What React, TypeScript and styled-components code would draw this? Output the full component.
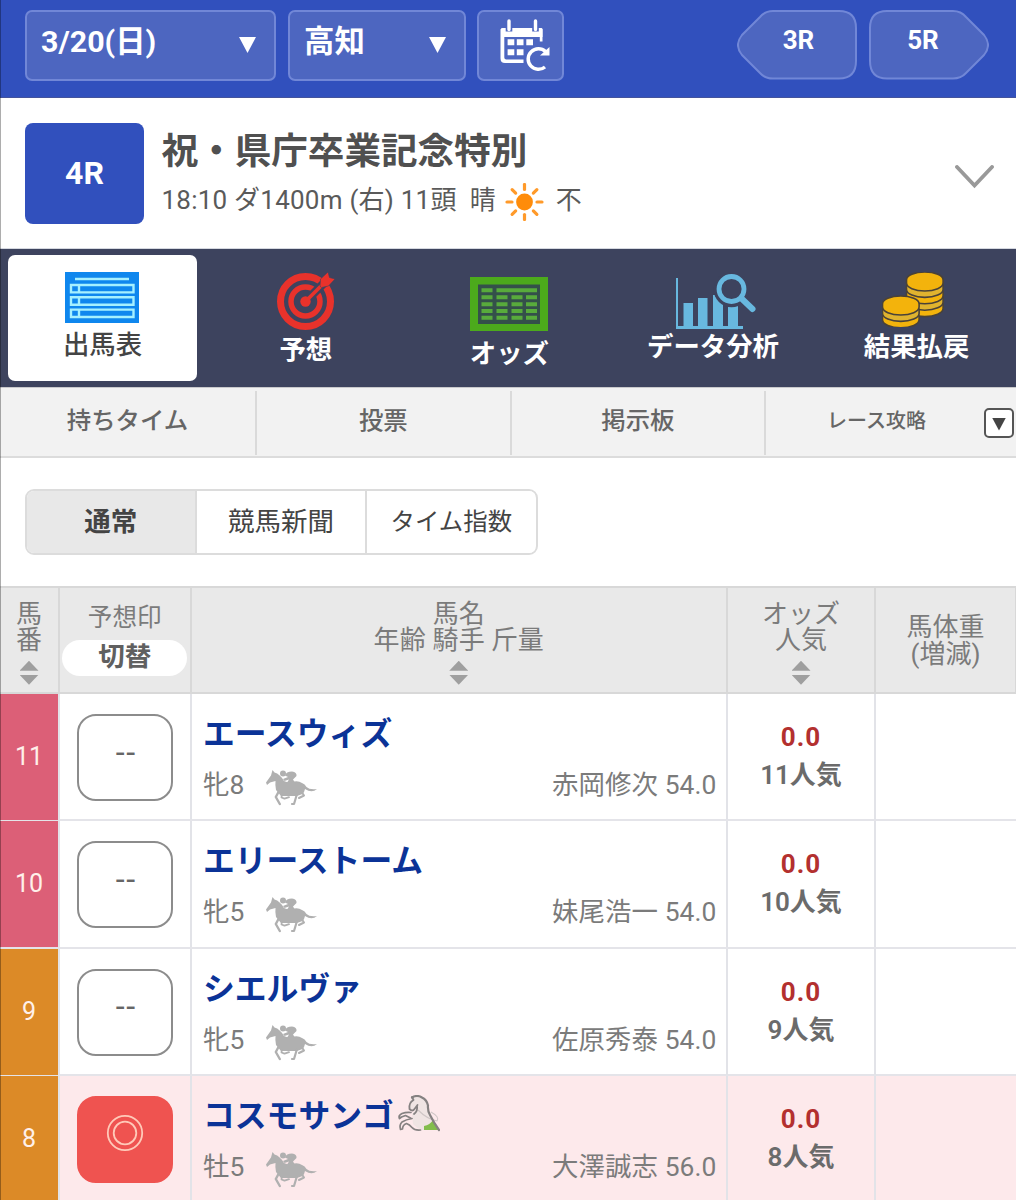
import React from "react";
import styled, { createGlobalStyle } from "styled-components";

const Global = createGlobalStyle`
  * { box-sizing: border-box; }
  body { margin: 0; background: #fff; }
`;

const Page = styled.div`
  position: relative;
  width: 1016px;
  height: 1200px;
  overflow: hidden;
  background: #fff;
  color: #555;
  font-family: Roboto, "Noto Sans CJK JP", sans-serif;
  white-space: nowrap;
`;

const EdgeShade = styled.div`
  position: absolute;
  left: 0;
  top: 0;
  bottom: 0;
  width: 1px;
  background: rgba(0, 0, 0, 0.32);
`;

/* ---------- top bar ---------- */

const TopBar = styled.header`
  display: flex;
  height: 98px;
  padding: 10px 27px 0 25px;
  background: #3150bd;
  border-bottom: 1px solid #44539c;
`;

const Picker = styled.button<{ $w: number; $gap?: number }>`
  display: flex;
  align-items: center;
  justify-content: space-between;
  width: ${(p) => p.$w}px;
  height: 71px;
  margin: 0 ${(p) => p.$gap ?? 0}px 0 0;
  padding: 0 18px 8px 14px;
  border: 2px solid #7187d7;
  border-radius: 7px;
  background: #4d66c0;
  color: #fff;
  font: 700 30.4px/40px Roboto, "Noto Sans CJK JP", sans-serif;
`;

const DownMark = styled.i<{ $w: number; $h: number; $c: string; $top?: number }>`
  width: ${(p) => p.$w}px;
  height: ${(p) => p.$h}px;
  margin-top: ${(p) => p.$top ?? 0}px;
  background: ${(p) => p.$c};
  clip-path: polygon(0 0, 100% 0, 50% 100%);
`;

const IconPicker = styled(Picker)`
  justify-content: center;
  padding: 0 0 1px 10px;
`;

const RaceStep = styled.a<{ $first?: boolean }>`
  display: grid;
  width: 120px;
  height: 70px;
  margin-left: ${(p) => (p.$first ? "auto" : "12px")};
  & > * {
    grid-area: 1 / 1;
  }
`;

const StepText = styled.span<{ $left?: number; $right?: number }>`
  z-index: 1;
  padding: 0 ${(p) => p.$right ?? 0}px 0 ${(p) => p.$left ?? 0}px;
  color: #fff;
  font-size: 26px;
  font-weight: 700;
  line-height: 61px;
  text-align: center;
`;

/* ---------- race title ---------- */

const RaceHead = styled.section`
  display: flex;
  height: 151px;
  padding: 25px 22px 0 25px;
  border-bottom: 1px solid #d5d8e0;
`;

const RaceNo = styled.div`
  width: 119px;
  height: 101px;
  border-radius: 8px;
  background: #3150bd;
  color: #fff;
  font-size: 32px;
  font-weight: 700;
  line-height: 100px;
  text-align: center;
`;

const RaceText = styled.div`
  margin-left: 17.5px;
  padding-top: 6px;
`;

const RaceName = styled.h1`
  margin: 0;
  color: #505050;
  font-size: 36.6px;
  font-weight: 700;
  line-height: 46px;
`;

const RaceInfo = styled.div`
  display: flex;
  height: 50px;
  align-items: center;
  color: #5a5a5a;
  font-size: 26px;
  line-height: 50px;
  svg {
    margin: 3px 12px 0 9px;
  }
`;

const InfoText = styled.span<{ $right?: number; $spacing?: number }>`
  margin-right: ${(p) => p.$right ?? 0}px;
  letter-spacing: ${(p) => p.$spacing ?? 0}px;
`;

const Chevron = styled.svg`
  margin: 42px 0 0 auto;
`;

/* ---------- main navigation ---------- */

const MainNav = styled.nav`
  display: flex;
  height: 138px;
  padding: 6px 0 0 1px;
  background: #3d435e;
`;

const NavItem = styled.a<{
  $pad: number;
  $gap: number;
  $active?: boolean;
  $nudge?: number;
}>`
  display: flex;
  flex: 0 0 ${(p) => (p.$active ? 189 : 203.6)}px;
  flex-direction: column;
  align-items: center;
  gap: ${(p) => p.$gap}px;
  height: 126px;
  margin: ${(p) => (p.$active ? "0 7px" : "0")};
  padding-top: ${(p) => p.$pad}px;
  border-radius: 7px;
  background: ${(p) => (p.$active ? "#fff" : "transparent")};
  color: ${(p) => (p.$active ? "#444" : "#fff")};
  svg {
    flex: none;
    margin-left: ${(p) => p.$nudge ?? 0}px;
  }
`;

const NavLabel = styled.span<{ $w?: number }>`
  font-size: 26.4px;
  font-weight: ${(p) => p.$w ?? 700};
  line-height: 30px;
`;

/* ---------- sub navigation ---------- */

const SubNav = styled.nav`
  display: flex;
  height: 71px;
  padding-top: 3px;
  border-top: 1px solid #c9c9cc;
  border-bottom: 2px solid #dcdcdc;
  background: #f2f2f2;
`;

const SubItem = styled.a<{ $size?: number }>`
  flex: 0 0 254.6px;
  height: 64px;
  border-right: 2px solid #dadada;
  color: #666;
  font-size: ${(p) => p.$size ?? 24.4}px;
  font-weight: 500;
  line-height: 59px;
  text-align: center;
  &:first-child {
    flex-basis: 257px;
  }
  &:last-child {
    display: flex;
    flex: 1;
    justify-content: flex-end;
    padding-right: 2px;
    border-right: 0;
    line-height: 61px;
  }
`;

const MoreBox = styled.span`
  display: flex;
  align-items: center;
  justify-content: center;
  width: 30px;
  height: 30px;
  margin: 17px 0 0 58px;
  border: 2px solid #555;
  border-radius: 5px;
  background: #fff;
`;

/* ---------- view switch ---------- */

const ViewBar = styled.div`
  display: flex;
  height: 128px;
  padding: 31px 0 0 24.5px;
`;

const ViewGroup = styled.div`
  display: flex;
  width: 513px;
  height: 66px;
  overflow: hidden;
  border: 2px solid #dcdcdc;
  border-radius: 9px;
`;

const ViewTab = styled.button<{ $on?: boolean; $size: number }>`
  flex: 1 1 0;
  padding: 0;
  border: 0;
  border-right: 2px solid #dcdcdc;
  background: ${(p) => (p.$on ? "#e8e8e8" : "#fff")};
  color: #444;
  font: ${(p) => (p.$on ? 700 : 400)} ${(p) => p.$size}px/60px Roboto,
    "Noto Sans CJK JP", sans-serif;
  &:last-child {
    border-right: 0;
  }
`;

/* ---------- table ---------- */

const columns = "60px 131.5px 536.5px 148px 140px";

const HeadRow = styled.div`
  display: grid;
  grid-template-columns: ${columns};
  height: 108px;
  border-top: 2px solid #d8d8d8;
  border-bottom: 2px solid #d8d8d8;
  background: #e9e9e9;
`;

const HeadCell = styled.div<{ $pad: number }>`
  display: flex;
  flex-direction: column;
  align-items: center;
  padding-top: ${(p) => p.$pad}px;
  border-right: 2px solid #d8d8d8;
  color: #7b7b7b;
  font-size: 26px;
  font-weight: 400;
  line-height: 26.6px;
  &:last-child {
    border-right-width: 1px;
  }
`;

const MarkTitle = styled.span`
  font-size: 24.6px;
`;

const HeadText = styled.span<{ $spacing?: number }>`
  letter-spacing: ${(p) => p.$spacing ?? 0}px;
`;

const Pill = styled.span`
  width: 125px;
  height: 36px;
  margin-top: 8px;
  border-radius: 18px;
  background: #fff;
  color: #606060;
  font-size: 26.5px;
  font-weight: 700;
  line-height: 34px;
  text-align: center;
`;

const SortMark = styled.span`
  display: flex;
  flex-direction: column;
  gap: 4px;
  margin-top: 7px;
  &::before,
  &::after {
    content: "";
    width: 19px;
    height: 10px;
    background: #9f9f9f;
    clip-path: polygon(50% 0, 100% 100%, 0 100%);
  }
  &::after {
    clip-path: polygon(0 0, 100% 0, 50% 100%);
  }
`;

const Row = styled.div<{ $picked?: boolean }>`
  display: grid;
  grid-template-columns: ${columns};
  height: 127.3px;
  border-bottom: 2px solid #e4e4e9;
  background: ${(p) => (p.$picked ? "#fde9eb" : "#fff")};
`;

const Cell = styled.div`
  border-right: 2px solid #e2e3e8;
  &:last-child {
    border-right: 0;
  }
`;

const NoCell = styled(Cell)<{ $c: string }>`
  background: ${(p) => p.$c};
  background-clip: padding-box;
  color: #fff0ea;
  font-size: 25px;
  line-height: 126px;
  text-align: center;
`;

const MarkCell = styled(Cell)`
  padding: 20px 0 0 17.4px;
`;

const Mark = styled.button<{ $on?: boolean }>`
  display: flex;
  align-items: center;
  justify-content: center;
  width: 96px;
  height: 87px;
  padding: 0 0 ${(p) => (p.$on ? 13 : 18)}px;
  border: 2px solid ${(p) => (p.$on ? "#ef5350" : "#8c8c8c")};
  border-radius: 19px;
  background: ${(p) => (p.$on ? "#ef5350" : "#fff")};
  color: #666;
  font: 500 29px/40px "Noto Sans CJK JP", sans-serif;
`;

const HorseCell = styled(Cell)`
  display: flex;
  flex-direction: column;
  padding: 17px 9.5px 0 11.5px;
`;

const HorseName = styled.div`
  display: flex;
  align-items: center;
  height: 46px;
  color: #0b3397;
  font-size: 31.8px;
  font-weight: 700;
  line-height: 46px;
  svg {
    margin: 0 0 5px 4px;
  }
`;

const HorseSub = styled.div`
  display: flex;
  align-items: center;
  margin-top: 8px;
  height: 40px;
  color: #7b7b7b;
  font-size: 26.4px;
  font-weight: 400;
  line-height: 40px;
  svg {
    margin: 6px 0 0 22px;
  }
`;

const Jockey = styled.span`
  margin-left: auto;
  letter-spacing: 0.1px;
`;

const OddsCell = styled(Cell)`
  padding-top: 24px;
  text-align: center;
`;

const Odds = styled.div`
  color: #b3302f;
  font-size: 26px;
  font-weight: 700;
  letter-spacing: 1px;
  line-height: 38px;
`;

const Rank = styled.div`
  color: #6b6b6b;
  font-size: 26px;
  font-weight: 600;
  line-height: 38px;
`;

/* ---------- drawings ---------- */

const CalendarIcon = () => (
  <svg width="52" height="54" viewBox="500 18 52 54" fill="none">
    <path d="M503 28h38q1.500 0 1.500 1.500v12h-2.700v-5H504.300v21q0 2 2 2H523.500v3.500H505q-4.500 0-4.500-4.500V29.500q0-1.500 2.500-1.500z" fill="#fff" />
    <path d="M503 28h38q1.500 0 1.500 1.500V37H501V29.500q0-1.500 2-1.500z" fill="#fff" />
    <path d="M509 19v12.500M535.500 19v12.500" stroke="#4d66c0" strokeWidth="6.600" />
    <path d="M509 21v8.500M535.500 21v8.500" stroke="#fff" strokeWidth="3.400" strokeLinecap="round" />
    <path d="M507.600 39.300h6.700v6h-6.700zM516.800 39.300h6.700v6h-6.700zM526.300 39.300h6.700v6h-6.700zM507.600 49.300h6.700v6h-6.700zM516.800 49.300h6.700v6h-6.700z" fill="#fff" />
    <path d="M545 67A10.300 10.300 0 1 1 545.500 51.500" stroke="#fff" strokeWidth="3.500" />
    <path d="M549.500 47v8.500h-9.500z" fill="#fff" />
  </svg>
);

const StepShape = ({ flip }: { flip?: boolean }) => (
  <svg width="120" height="70" viewBox="0 0 120 70">
    <path
      d="M36 1H102Q119 1 119 18V51Q119 68.500 102 68.500H36Q28 68.500 23 63L5 45Q-3 35 5 25L23 7Q28 1 36 1Z"
      fill="#4d66c0"
      stroke="#7187d7"
      strokeWidth="2"
      transform={flip ? "translate(120 0) scale(-1 1)" : undefined}
    />
  </svg>
);

const SunIcon = () => (
  <svg width="39" height="38" viewBox="-19.500 -19 39 38">
    <circle r="8.400" fill="#ff8c0a" />
    {[0, 45, 90, 135, 180, 225, 270, 315].map((a) => (
      <path key={a} d="M12.500 0H17.500" stroke="#ff9a2a" strokeWidth="3.200" strokeLinecap="round" transform={`rotate(${a})`} />
    ))}
  </svg>
);

const TableIcon = () => (
  <svg width="74" height="51" viewBox="0 0 74 51">
    <path d="M0 0h74v51H0z" fill="#0f87ee" />
    <path d="M10 7h54" stroke="#a5f0ff" strokeWidth="2.600" />
    {[13, 25.300, 37.600].map((y) => (
      <path key={y} d={`M6 ${y}h62.500v7.400H6zM14 ${y}v7.400`} fill="none" stroke="#a5f0ff" strokeWidth="2.400" />
    ))}
  </svg>
);

const TargetIcon = () => (
  <svg width="58" height="58" viewBox="0 0 58 58">
    <g fill="none" stroke="#e8322b">
      <circle cx="28.500" cy="29.500" r="25" strokeWidth="7" />
      <circle cx="28.500" cy="29.500" r="14.500" strokeWidth="5.500" />
    </g>
    <path d="M28 30L50 8" stroke="#3d435e" strokeWidth="8.500" />
    <circle cx="28.500" cy="29.500" r="5.200" fill="#e8322b" />
    <path d="M28.500 29.500L49 9" stroke="#e8322b" strokeWidth="3.800" />
    <path d="M43 14l.5-7L51 0l1.500 5.500L58 7l-6.500 7-7 1.500z" fill="#e8322b" stroke="#3d435e" strokeWidth=".6" />
  </svg>
);

const BoardIcon = () => (
  <svg width="78" height="54" viewBox="0 0 78 54">
    <path d="M0 0h78v54H0z" fill="#4caa1c" />
    <path d="M8 7.500h62v39.500H8z" fill="#34504a" />
    <g stroke="#58ab3c" strokeWidth="4">
      <path d="M11.500 13.300h11M26.500 13.300h40.500" />
      {[20.300, 27.200, 34, 40.800].map((y) => (
        <path key={y} d={`M11.500 ${y}h11M26.500 ${y}h11M41.500 ${y}h11M56 ${y}h11`} />
      ))}
    </g>
  </svg>
);

const AnalysisIcon = () => (
  <svg width="80" height="57" viewBox="0 0 80 57" fill="#68b8df">
    <path d="M0 5h2v48h65v3H0zM7.500 30h9.500v24H7.500zM22 25h9.500v29H22zM37 22h10v32H37zM52 32h10v22H52z" />
    <path d="M54 16L70 33" stroke="#3d435e" strokeWidth="11" />
    <circle cx="55.500" cy="16.500" r="17.800" fill="#3d435e" />
    <path d="M65 25L76.500 36" stroke="#68b8df" strokeWidth="6" strokeLinecap="round" />
    <circle cx="55.500" cy="16" r="12.500" fill="#3d435e" stroke="#68b8df" strokeWidth="4.800" />
  </svg>
);

const Stack = ({ x, top, n }: { x: number; top: number; n: number }) => (
  <g>
    {Array.from({ length: n }, (_, i) => n - 1 - i).map((i) => (
      <path
        key={i}
        d={`M${x} ${top + i * 6.400}a18.300 8 0 0 1 36.600 0v3a18.300 8 0 0 1-36.600 0z`}
        fill={i % 2 ? "#e0b32f" : "#f3b30c"}
        stroke="#4a4238"
        strokeWidth="1.600"
      />
    ))}
  </g>
);

const CoinsIcon = () => (
  <svg width="62" height="55" viewBox="0 0 62 55">
    <Stack x={24.500} top={8} n={5} />
    <Stack x={0.500} top={32} n={3} />
  </svg>
);

const RunnerIcon = () => (
  <svg width="52" height="36" viewBox="0 0 52 36" fill="#b0b0b0">
    <path d="M1 15L0 12.500 5 5.500 6.500 0l2 2.500Q14 4 18 11q4 2 8 1 6-2 10 1 3 1 4.500 4 3 3 10.500 2-5 4.500-12 0-.5 3-2.500 5L31 26H15l-5-6Q9 15 9.500 11L4 12.500z" />
    <circle cx="17" cy="3.600" r="3" />
    <path d="M19 5.500Q20 1.500 26 1.500q5 .5 4.500 4.500L27 9.500l2.500 4h-9l2.500-4-4.500 1.500-1.500-2 5-2z" />
    <g fill="none" stroke="#b0b0b0" strokeLinecap="round" strokeLinejoin="round">
      <path d="M12.500 22L9.800 27l4 7" strokeWidth="2.400" />
      <path d="M16 23l-.5 4.500 3 1.200 4.500-1.500" strokeWidth="1.800" />
      <path d="M31 24l-1.500 5-1.500 5h-2" strokeWidth="2.200" />
      <path d="M35 21l3 4.500-5 2.500" strokeWidth="2" />
    </g>
  </svg>
);

const RearingIcon = () => (
  <svg width="42" height="37" viewBox="0 0 42 37" fill="none">
    <path d="M14 2Q22-1 28 6q3 5 2 11 5 12 11 18H24q-4-1-9-6l-1-10 4-5-6 0-1-6z" fill="#efe4e3" />
    <path d="M26 31q6-1 9-6l6.500 10H26z" fill="#82bd4c" />
    <path d="M20 15q9 9 19 11 3-4-6-9" stroke="#cfc6c6" strokeWidth="1.100" />
    <g stroke="#858181" strokeLinecap="round" strokeLinejoin="round">
      <path d="M14 2.500Q19-.5 24 2.500q5 2.500 6 8-.5 5 2 9.500 4 8 9 15" strokeWidth="2.200" />
      <path d="M14 2l1.500 3Q10.500 8 11.500 14q3 3 5 0l3-4M19 11q1 5-3 8" strokeWidth="1.800" />
      <path d="M13 17.500Q8 17 4 18.500q-4 2-2.500 5L3.500 22l4-1.500 5 2.500" strokeWidth="1.700" />
      <path d="M14 23.500Q8 24.500 4 27q-3 3-1.500 7.500L4.500 34q0-4 4-5.500 3 1 5.500 4t8.500 2.500" strokeWidth="1.700" />
    </g>
  </svg>
);

const DoubleCircle = () => (
  <svg width="38" height="38" viewBox="-19 -19 38 38" fill="none" stroke="#ffc9b8" strokeWidth="1.800">
    <circle r="17.200" />
    <circle r="11.300" />
  </svg>
);

/* ---------- data ---------- */

const entries = [
  { no: 11, color: "#dc5f77", name: "エースウィズ", age: "牝8", jockey: "赤岡修次 54.0" },
  { no: 10, color: "#dc5f77", name: "エリーストーム", age: "牝5", jockey: "妹尾浩一 54.0" },
  { no: 9, color: "#dc8a27", name: "シエルヴァ", age: "牝5", jockey: "佐原秀泰 54.0" },
  { no: 8, color: "#dc8a27", name: "コスモサンゴ", age: "牡5", jockey: "大澤誠志 56.0", picked: true },
];

export default function App() {
  return (
    <Page>
      <Global />
      <TopBar>
        <Picker $w={251} $gap={12}>
          <span>3/20(日)</span>
          <DownMark $w={17} $h={16} $c="#fff" $top={7} />
        </Picker>
        <Picker $w={178} $gap={11}>
          <span>高知</span>
          <DownMark $w={17} $h={16} $c="#fff" $top={7} />
        </Picker>
        <IconPicker $w={87}>
          <CalendarIcon />
        </IconPicker>
        <RaceStep $first>
          <StepShape />
          <StepText $left={3}>3R</StepText>
        </RaceStep>
        <RaceStep>
          <StepShape flip />
          <StepText $right={12}>5R</StepText>
        </RaceStep>
      </TopBar>

      <RaceHead>
        <RaceNo>4R</RaceNo>
        <RaceText>
          <RaceName>祝・県庁卒業記念特別</RaceName>
          <RaceInfo>
            <InfoText $right={13} $spacing={0.23}>
              18:10 ダ1400m (右) 11頭
            </InfoText>
            <InfoText>晴</InfoText>
            <SunIcon />
            <InfoText>不</InfoText>
          </RaceInfo>
        </RaceText>
        <Chevron width="39" height="24" viewBox="0 0 39 24" fill="none">
          <path d="M2 2l17.500 18.500L37 2" stroke="#999" strokeWidth="3.800" strokeLinecap="round" />
        </Chevron>
      </RaceHead>

      <MainNav>
        <NavItem $active $pad={17} $gap={7} $nudge={-1}>
          <TableIcon />
          <NavLabel $w={500}>出馬表</NavLabel>
        </NavItem>
        <NavItem $pad={17} $gap={5}>
          <TargetIcon />
          <NavLabel>予想</NavLabel>
        </NavItem>
        <NavItem $pad={22} $gap={8}>
          <BoardIcon />
          <NavLabel>オッズ</NavLabel>
        </NavItem>
        <NavItem $pad={18} $gap={2} $nudge={6}>
          <AnalysisIcon />
          <NavLabel>データ分析</NavLabel>
        </NavItem>
        <NavItem $pad={17} $gap={5} $nudge={-8}>
          <CoinsIcon />
          <NavLabel>結果払戻</NavLabel>
        </NavItem>
      </MainNav>

      <SubNav>
        <SubItem>持ちタイム</SubItem>
        <SubItem>投票</SubItem>
        <SubItem>掲示板</SubItem>
        <SubItem $size={20}>
          レース攻略
          <MoreBox>
            <DownMark $w={14} $h={13} $c="#444" $top={2} />
          </MoreBox>
        </SubItem>
      </SubNav>

      <ViewBar>
        <ViewGroup>
          <ViewTab $on $size={26.5}>通常</ViewTab>
          <ViewTab $size={26.5}>競馬新聞</ViewTab>
          <ViewTab $size={24.4}>タイム指数</ViewTab>
        </ViewGroup>
      </ViewBar>

      <HeadRow>
        <HeadCell $pad={12.5}>
          <HeadText>馬</HeadText>
          <HeadText>番</HeadText>
          <SortMark />
        </HeadCell>
        <HeadCell $pad={17}>
          <MarkTitle>予想印</MarkTitle>
          <Pill>切替</Pill>
        </HeadCell>
        <HeadCell $pad={12.5}>
          <HeadText>馬名</HeadText>
          <HeadText $spacing={0.2}>年齢 騎手 斤量</HeadText>
          <SortMark />
        </HeadCell>
        <HeadCell $pad={12.5}>
          <HeadText>オッズ</HeadText>
          <HeadText>人気</HeadText>
          <SortMark />
        </HeadCell>
        <HeadCell $pad={26}>
          <HeadText>馬体重</HeadText>
          <HeadText>(増減)</HeadText>
        </HeadCell>
      </HeadRow>

      {entries.map((e) => (
        <Row key={e.no} $picked={e.picked}>
          <NoCell $c={e.color}>{e.no}</NoCell>
          <MarkCell>
            <Mark $on={e.picked}>{e.picked ? <DoubleCircle /> : "--"}</Mark>
          </MarkCell>
          <HorseCell>
            <HorseName>
              {e.name}
              {e.picked && <RearingIcon />}
            </HorseName>
            <HorseSub>
              {e.age}
              <RunnerIcon />
              <Jockey>{e.jockey}</Jockey>
            </HorseSub>
          </HorseCell>
          <OddsCell>
            <Odds>0.0</Odds>
            <Rank>{e.no}人気</Rank>
          </OddsCell>
          <Cell />
        </Row>
      ))}
      <EdgeShade />
    </Page>
  );
}
